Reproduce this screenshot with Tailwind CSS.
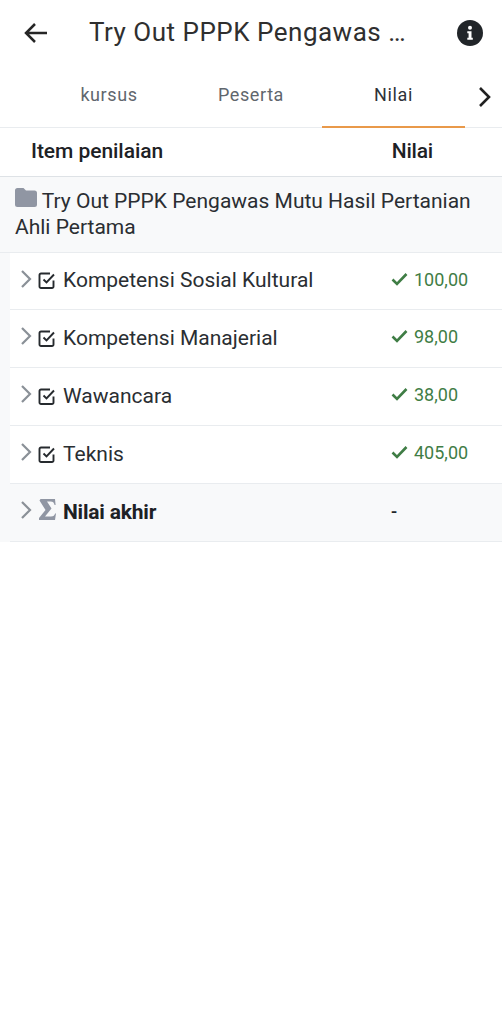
<!doctype html>
<html lang="en">
<head>
<meta charset="utf-8" />
<title>Nilai</title>
<script src="https://cdn.jsdelivr.net/npm/@tailwindcss/browser@4"></script>
</head>
<body class="bg-white font-['Roboto',sans-serif] text-[#2a2e32]">
<div class="w-[502px] h-[1024px] overflow-hidden">

  <!-- app bar -->
  <header class="h-[65px] flex items-center pl-[22px] pr-[19px]">
    <svg class="w-[28px] h-[28px] text-[#262626]" viewBox="0 0 28 28" fill="none" stroke="currentColor" stroke-width="2.500"><path d="M25 14H4M13 5l-9 9 9 9"/></svg>
    <h1 class="ml-[39px] text-[26px] tracking-[0.5px] whitespace-nowrap text-[#2f2f2f]">Try Out PPPK Pengawas …</h1>
    <svg class="ml-auto w-[26px] h-[26px]" viewBox="0 0 26 26"><circle cx="13" cy="13" r="13" fill="#212529"/><circle cx="13" cy="7.800" r="2" fill="#fff"/><path d="M10.300 11.300h4.200v6.500h1.300v2h-5.500v-2h1.300v-4.500h-1.300z" fill="#fff"/></svg>
  </header>

  <!-- tabs -->
  <nav class="h-[63px] flex border-b border-[#e9ecef] text-[18px] tracking-[0.6px]">
    <div class="w-[38px]"></div>
    <a class="w-[142px] flex items-center justify-center pb-[3px] text-[#5f666d]">kursus</a>
    <a class="w-[142px] flex items-center justify-center pb-[3px] text-[#5f666d]">Peserta</a>
    <a class="w-[143px] h-[63px] flex items-center justify-center pb-[3px] text-[#2d3238] border-b-2 border-[#e9994a]">Nilai</a>
    <svg class="ml-[13px] mt-[21px] w-[14px] h-[22px] text-[#212121]" viewBox="0 0 14 22" fill="none" stroke="currentColor" stroke-width="2.600"><path d="M2 2l9 9-9 9"/></svg>
  </nav>

  <!-- table head -->
  <div class="h-[49px] flex items-center border-b border-[#dee2e6] text-[21px] font-medium text-[#1d2125]">
    <span class="ml-[31px] tracking-[-0.05px]">Item penilaian</span>
    <span class="ml-auto mr-[69px] tracking-[-0.2px]">Nilai</span>
  </div>

  <!-- category -->
  <div class="h-[76px] bg-[#f8f9fa] border-b border-[#e9ecef] pl-[15px] pr-[20px] pt-[11px] text-[21px] leading-[26px]">
    <svg class="inline-block align-[1px] w-[22px] h-[19px]" viewBox="0 0 22 19"><path d="M2.500 0h6l2.500 2.500h8.500A2.500 2.500 0 0 1 22 5v11.500a2.500 2.500 0 0 1-2.500 2.500h-17A2.500 2.500 0 0 1 0 16.500v-14A2.500 2.500 0 0 1 2.500 0z" fill="#9096a3"/></svg>
    Try Out PPPK Pengawas Mutu Hasil Pertanian Ahli Pertama
  </div>

  <!-- rows -->
  <div class="pl-[10px] bg-[#f8f9fa]">
    <div class="h-[57px] bg-white border-b border-[#e9ecef] flex items-center">
      <svg class="ml-[10px] mb-[5px] w-[12px] h-[20px] text-[#8a9097]" viewBox="0 0 12 20" fill="none" stroke="currentColor" stroke-width="2.200"><path d="M2 2l8 8-8 8"/></svg>
      <svg class="ml-[6px] w-[18px] h-[18px] text-[#262a2e]" viewBox="0 0 18 18" fill="none" stroke="currentColor" stroke-width="1.900"><path d="M15.500 8.500v6a1.500 1.500 0 0 1-1.500 1.500H3a1.500 1.500 0 0 1-1.500-1.500V3A1.500 1.500 0 0 1 3 1.500h9M5.500 7.500 8.500 10.500 16 2.500"/></svg>
      <span class="ml-[7px] text-[21px]">Kompetensi Sosial Kultural</span>
      <span class="ml-auto w-[111px] flex items-center text-[#3f7d45] text-[18px]">
        <svg class="mb-[5px] w-[17px] h-[14px]" viewBox="0 0 17 14" fill="none" stroke="currentColor" stroke-width="2.600"><path d="M1.500 7.500 6 12 15.500 2"/></svg>
        <span class="ml-[6px] mb-[3px]">100,00</span>
      </span>
    </div>
    <div class="h-[58px] bg-white border-b border-[#e9ecef] flex items-center">
      <svg class="ml-[10px] mb-[5px] w-[12px] h-[20px] text-[#8a9097]" viewBox="0 0 12 20" fill="none" stroke="currentColor" stroke-width="2.200"><path d="M2 2l8 8-8 8"/></svg>
      <svg class="ml-[6px] w-[18px] h-[18px] text-[#262a2e]" viewBox="0 0 18 18" fill="none" stroke="currentColor" stroke-width="1.900"><path d="M15.500 8.500v6a1.500 1.500 0 0 1-1.500 1.500H3a1.500 1.500 0 0 1-1.500-1.500V3A1.500 1.500 0 0 1 3 1.500h9M5.500 7.500 8.500 10.500 16 2.500"/></svg>
      <span class="ml-[7px] text-[21px]">Kompetensi Manajerial</span>
      <span class="ml-auto w-[111px] flex items-center text-[#3f7d45] text-[18px]">
        <svg class="mb-[6px] w-[17px] h-[14px]" viewBox="0 0 17 14" fill="none" stroke="currentColor" stroke-width="2.600"><path d="M1.500 7.500 6 12 15.500 2"/></svg>
        <span class="ml-[6px] mb-[4px]">98,00</span>
      </span>
    </div>
    <div class="h-[58px] bg-white border-b border-[#e9ecef] flex items-center">
      <svg class="ml-[10px] mb-[5px] w-[12px] h-[20px] text-[#8a9097]" viewBox="0 0 12 20" fill="none" stroke="currentColor" stroke-width="2.200"><path d="M2 2l8 8-8 8"/></svg>
      <svg class="ml-[6px] w-[18px] h-[18px] text-[#262a2e]" viewBox="0 0 18 18" fill="none" stroke="currentColor" stroke-width="1.900"><path d="M15.500 8.500v6a1.500 1.500 0 0 1-1.500 1.500H3a1.500 1.500 0 0 1-1.500-1.500V3A1.500 1.500 0 0 1 3 1.500h9M5.500 7.500 8.500 10.500 16 2.500"/></svg>
      <span class="ml-[7px] text-[21px]">Wawancara</span>
      <span class="ml-auto w-[111px] flex items-center text-[#3f7d45] text-[18px]">
        <svg class="mb-[6px] w-[17px] h-[14px]" viewBox="0 0 17 14" fill="none" stroke="currentColor" stroke-width="2.600"><path d="M1.500 7.500 6 12 15.500 2"/></svg>
        <span class="ml-[6px] mb-[4px]">38,00</span>
      </span>
    </div>
    <div class="h-[58px] bg-white border-b border-[#e9ecef] flex items-center">
      <svg class="ml-[10px] mb-[5px] w-[12px] h-[20px] text-[#8a9097]" viewBox="0 0 12 20" fill="none" stroke="currentColor" stroke-width="2.200"><path d="M2 2l8 8-8 8"/></svg>
      <svg class="ml-[6px] w-[18px] h-[18px] text-[#262a2e]" viewBox="0 0 18 18" fill="none" stroke="currentColor" stroke-width="1.900"><path d="M15.500 8.500v6a1.500 1.500 0 0 1-1.500 1.500H3a1.500 1.500 0 0 1-1.500-1.500V3A1.500 1.500 0 0 1 3 1.500h9M5.500 7.500 8.500 10.500 16 2.500"/></svg>
      <span class="ml-[7px] text-[21px]">Teknis</span>
      <span class="ml-auto w-[111px] flex items-center text-[#3f7d45] text-[18px]">
        <svg class="mb-[6px] w-[17px] h-[14px]" viewBox="0 0 17 14" fill="none" stroke="currentColor" stroke-width="2.600"><path d="M1.500 7.500 6 12 15.500 2"/></svg>
        <span class="ml-[6px] mb-[4px]">405,00</span>
      </span>
    </div>
    <div class="h-[58px] bg-[#f8f9fa] border-b border-[#e9ecef] flex items-center">
      <svg class="ml-[10px] mb-[5px] w-[12px] h-[20px] text-[#8a9097]" viewBox="0 0 12 20" fill="none" stroke="currentColor" stroke-width="2.200"><path d="M2 2l8 8-8 8"/></svg>
      <svg class="ml-[7px] mb-[6px] w-[17px] h-[21px]" viewBox="0 0 17 21"><path d="M1.500 0H16l.6 6h-1C15 3.500 14 2.500 11.500 2.500H8l4.500 7-6.500 8h6c2.500 0 3.500-1.200 4.100-3h.9L16 21H0v-2l6.500-8L.5 1.500z" fill="#9096a3"/></svg>
      <span class="ml-[7px] text-[21px] font-bold tracking-[-0.2px] text-[#1d2125]">Nilai akhir</span>
      <span class="ml-auto w-[111px] mb-[3px] text-[18px] font-medium text-[#22262a]">-</span>
    </div>
  </div>
</div>
</body>
</html>
